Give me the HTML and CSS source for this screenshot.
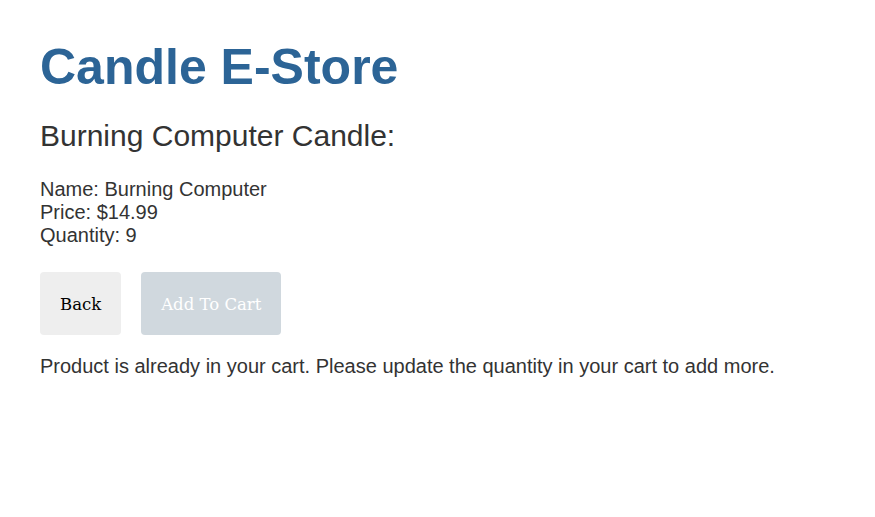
FILE: index.html
```html
<!DOCTYPE html>
<html>
<head>
<meta charset="utf-8">
<link rel="stylesheet" href="styles.css">
</head>
<body>
<div class="page">
  <h1 class="title">Candle E-Store</h1>
  <h2 class="product-name">Burning Computer Candle:</h2>
  <div class="details">
    <div>Name: Burning Computer</div>
    <div>Price: $14.99</div>
    <div>Quantity: 9</div>
  </div>
  <div class="actions">
    <button class="btn btn-back">Back</button>
    <button class="btn btn-add" disabled>Add To Cart</button>
  </div>
  <p class="message">Product is already in your cart. Please update the quantity in your cart to add more.</p>
</div>
</body>
</html>
```
FILE: styles.css
```css
html, body {
  margin: 0;
  padding: 0;
  background: #fff;
}
body {
  font-family: "Liberation Sans", Arial, sans-serif;
  color: #333;
}
.page {
  padding: 38px 40px;
}
.title {
  font-size: 50px;
  font-weight: bold;
  color: #2c6496;
  margin: 0 0 23px;
}
.product-name {
  font-size: 30px;
  font-weight: normal;
  color: #333;
  margin: 0 0 25px;
}
.details {
  font-size: 20px;
  line-height: 23px;
}
.actions {
  display: flex;
  gap: 20px;
  margin-top: 25px;
}
.btn {
  font-family: "DejaVu Serif", Georgia, serif;
  font-size: 16.5px;
  border: none;
  border-radius: 4px;
  height: 63px;
  padding: 2px 20px 0;
}
.btn-back {
  background: #eeeeee;
  color: #000;
}
.btn-add {
  background: #d0d8de;
  color: #fff;
}
.message {
  font-size: 20px;
  margin: 20px 0 0;
}
```
